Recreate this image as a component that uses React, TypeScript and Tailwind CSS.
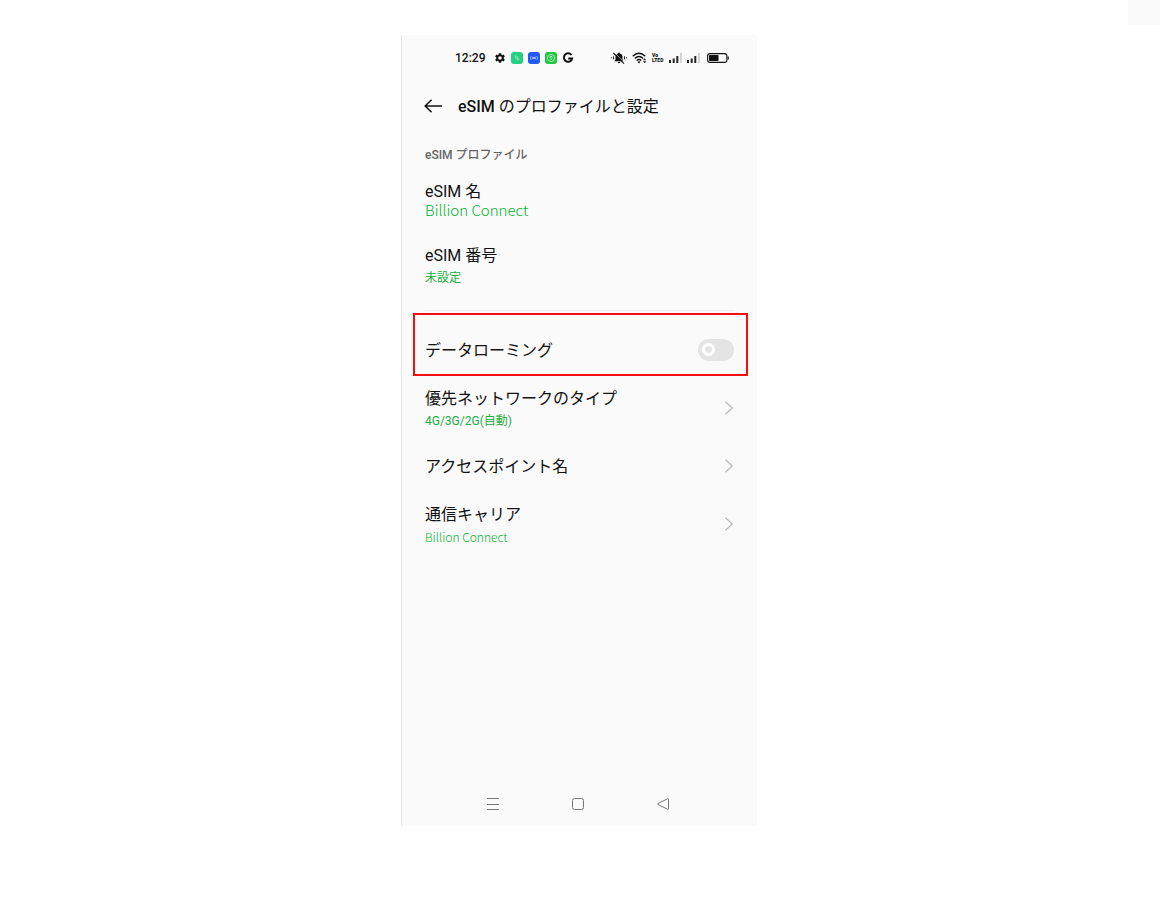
import { useState } from 'react'
import type { ReactNode } from 'react'

interface LinkRowProps {
  title: string
  children?: ReactNode
}

function StatusBar() {
  return (
    <div className="flex h-[46px] items-center justify-between pr-7 pl-[53px] text-[#111]">
      <div className="flex items-center gap-[5px]">
        <span className="mr-1 font-['Roboto',sans-serif] text-xs leading-5 font-medium">12:29</span>

        {/* Settings */}
        <svg className="size-3" viewBox="0 0 24 24" fill="currentColor">
          <path d="M19.4 13a7.5 7.5 0 0 0 0-2l2.3-1.8-2.3-4-2.8 1.1a7.500 7.500 0 0 0-1.700-1L14.400 2.300H9.600L9.200 5.300a7.500 7.500 0 0 0-1.700 1L4.700 5.200l-2.300 4L4.700 11a7.500 7.500 0 0 0 0 2l-2.300 1.800 2.300 4 2.800-1.100a7.500 7.500 0 0 0 1.700 1l.4 3h4.800l.4-3a7.500 7.500 0 0 0 1.700-1l2.800 1.100 2.300-4zM12 15.600a3.600 3.600 0 1 1 0-7.200 3.600 3.600 0 0 1 0 7.200z" />
        </svg>

        {/* Notification apps */}
        <svg className="size-3" viewBox="0 0 12 12" fill="none">
          <rect width="12" height="12" rx="3" fill="#25cf80" />
          <path d="M3.700 4.800L5 3.700v3.800M6.800 4.500v3.800L8.200 7.200" stroke="#b5f2d3" strokeWidth=".8" />
        </svg>
        <svg className="size-3" viewBox="0 0 12 12" fill="none">
          <rect width="12" height="12" rx="3" fill="#2159f2" />
          <circle cx="6" cy="6" r=".9" fill="#d3defc" />
          <path d="M3.200 4q-1.400 2 0 4M4.700 4.800q-.8 1.200 0 2.400M8.800 4q1.400 2 0 4M7.300 4.800q.8 1.200 0 2.400" stroke="#b9cbfb" strokeWidth=".7" />
        </svg>
        <svg className="size-3" viewBox="0 0 12 12" fill="none">
          <rect width="12" height="12" rx="3" fill="#22c442" />
          <circle cx="6" cy="6" r="3.600" stroke="#c9f4d0" strokeWidth=".8" />
          <path d="M6 8.300V4M4.400 5.500L6 4l1.600 1.500" stroke="#c9f4d0" strokeWidth=".8" />
        </svg>

        {/* Google */}
        <svg className="size-3" viewBox="0 0 12 12" fill="none" stroke="currentColor" strokeWidth="2">
          <path d="M9.400 3A4.200 4.200 0 1 0 10.200 6.400H6.200" />
        </svg>
      </div>

      <div className="flex items-center gap-[5px]">
        {/* Muted bell */}
        <svg className="h-3 w-4" viewBox="0 0 16 12" fill="none" stroke="currentColor">
          <path d="M8 .6c.6 0 .9.300.9.800 1.700.5 2.600 1.800 2.600 3.600v2.400l1.200 1.800H3.300l1.200-1.800V5c0-1.800.9-3.100 2.600-3.600 0-.5.300-.8.900-.8zM6.600 9.900h2.800q-.3 1.300-1.400 1.300T6.600 9.900z" fill="currentColor" stroke="none" />
          <path d="M3.200 .4l10.200 10.400" stroke="#fafafa" strokeWidth=".7" />
          <path d="M2.400 1l10.600 10.600" strokeWidth="1.100" />
          <path d="M2.500 4.300v3M.6 5.200v1.200M13.500 4.300v3M15.400 5.200v1.200" strokeWidth=".9" />
        </svg>

        {/* Wi-Fi */}
        <svg className="h-3 w-[15px]" viewBox="0 0 15 12" fill="none" stroke="currentColor" strokeWidth="1.400">
          <path d="M.7 4.200Q7 -1.700 13.300 4.200M2.800 6.400q4.200-3.800 8.400 0M4.700 8.500Q7 6.500 9.300 8.500" />
          <path d="M5.500 9.800Q7 8.600 8.500 9.800L7 11.500z" fill="currentColor" stroke="none" />
          <path d="M12.600 6.300l1.500 2h-3zM12.600 11.300l1.500-2h-3z" fill="currentColor" stroke="none" />
        </svg>

        <span className="w-3 font-['Roboto',sans-serif] text-[5px] leading-[5px] font-black">
          Vo
          <br />
          LTED
        </span>

        <SignalBars />
        <SignalBars />

        {/* Battery */}
        <svg className="ml-0.5 h-3 w-[22px]" viewBox="0 0 22 12" fill="none">
          <rect x=".6" y="1.600" width="19.300" height="8.800" rx="2.400" stroke="currentColor" strokeWidth="1.100" />
          <rect x="2" y="3" width="9.500" height="6" rx=".8" fill="currentColor" />
          <path d="M21.200 4.500v3" stroke="currentColor" strokeWidth="1.200" />
        </svg>
      </div>
    </div>
  )
}

function SignalBars() {
  return (
    <svg className="h-3 w-[13px]" viewBox="0 0 13 12">
      <path d="M0 8h2v3H0zM3.700 6.500h2V11h-2zM7.300 4h2v7h-2z" fill="#222" />
      <path d="M11 1h2v10h-2z" fill="#d2d2d2" />
    </svg>
  )
}

function LinkRow({ title, children }: LinkRowProps) {
  return (
    <li>
      <a href="#" className="flex h-[58px] items-center justify-between">
        <span className="block pt-0.5">
          <span className="block text-base leading-6">{title}</span>
          {children}
        </span>
        <svg className="h-[14px] w-[10px]" viewBox="0 0 10 14" fill="none" stroke="#b8b8b8" strokeWidth="1.200">
          <path d="M1.500 .8L8.200 7l-6.700 6.200" />
        </svg>
      </a>
    </li>
  )
}

export default function App() {
  const [roaming, setRoaming] = useState(false)

  return (
    <div className="relative min-h-screen bg-white py-[35px] pr-[18px] pl-4 font-['Roboto','Noto_Sans_CJK_JP',sans-serif] text-[#111]">
      <div className="absolute top-0 right-0 h-[25px] w-8 bg-[#fafafa]" />

      <main className="mx-auto flex min-h-[791px] max-w-[356px] flex-col border-l border-[#e6e6e6] bg-[#fafafa]">
        <StatusBar />

        {/* Header */}
        <header className="flex h-[50px] items-center gap-4 px-[22px]">
          <button type="button" aria-label="戻る">
            <svg className="h-4 w-[18px]" viewBox="0 0 18 16" fill="none" stroke="currentColor" strokeWidth="1.500">
              <path d="M18 8H1.200M7.600 1.800L1.200 8l6.400 6.200" />
            </svg>
          </button>
          <h1 className="pt-0.5 text-base leading-6">
            <span className="font-medium">eSIM</span> のプロファイルと設定
          </h1>
        </header>

        {/* Profile */}
        <section className="px-[23px] pt-[14px]">
          <h2 className="text-xs leading-5 font-medium text-[#666]">eSIM プロファイル</h2>
          <dl className="mt-[17px]">
            <dt className="text-base leading-5">eSIM 名</dt>
            <dd className="font-['Noto_Sans_CJK_JP',sans-serif] text-[15px] leading-4 font-light text-[#00b42c]">
              Billion Connect
            </dd>
            <dt className="mt-[26px] text-base leading-6">eSIM 番号</dt>
            <dd className="text-xs leading-5 text-[#22ac3e]">未設定</dd>
          </dl>
          <hr className="mt-[22px] border-[#f0f0f0]" />
        </section>

        {/* Data roaming */}
        <label className="mt-[2px] mr-[9px] ml-[11px] flex h-[63px] items-center justify-between border-2 border-[#f80c0c] pt-[10px] pr-3 pl-[10px]">
          <span className="pt-0.5 text-base leading-6">データローミング</span>
          <input
            type="checkbox"
            role="switch"
            checked={roaming}
            onChange={(e) => setRoaming(e.target.checked)}
            className="flex h-[22px] w-9 appearance-none items-center rounded-full bg-[#e4e4e4] px-1 before:size-[13px] before:rounded-full before:border-[3px] before:border-white checked:justify-end checked:bg-[#22ac3e]"
          />
        </label>

        <ul className="mt-[3px] px-[23px]">
          <LinkRow title="優先ネットワークのタイプ">
            <span className="block text-xs leading-5 text-[#22ac3e]">4G/3G/2G(自動)</span>
          </LinkRow>
          <LinkRow title="アクセスポイント名" />
          <LinkRow title="通信キャリア">
            <span className="block font-['Noto_Sans_CJK_JP',sans-serif] text-xs leading-5 font-light text-[#00b42c]">
              Billion Connect
            </span>
          </LinkRow>
        </ul>

        {/* System navigation */}
        <nav className="mt-auto flex h-11 items-center justify-center pr-[3px] text-[#777]">
          <button type="button" aria-label="履歴" className="flex w-[85px] justify-center">
            <svg className="size-3" viewBox="0 0 12 12" stroke="currentColor">
              <path d="M0 .5h12M0 6.500h12M0 11.500h12" />
            </svg>
          </button>
          <button type="button" aria-label="ホーム" className="flex w-[85px] justify-center">
            <svg className="size-3" viewBox="0 0 12 12" fill="none" stroke="currentColor">
              <rect x=".5" y=".5" width="11" height="11" rx="2" />
            </svg>
          </button>
          <button type="button" aria-label="戻る" className="flex w-[85px] justify-center">
            <svg className="size-3" viewBox="0 0 12 12" fill="none" stroke="currentColor" strokeLinejoin="round">
              <path d="M.8 5.600L10.500 .8q1-.3 1 .6v9.200q0 .9-1 .6L.8 6.400q-.6-.4 0-.8z" />
            </svg>
          </button>
        </nav>
      </main>
    </div>
  )
}
